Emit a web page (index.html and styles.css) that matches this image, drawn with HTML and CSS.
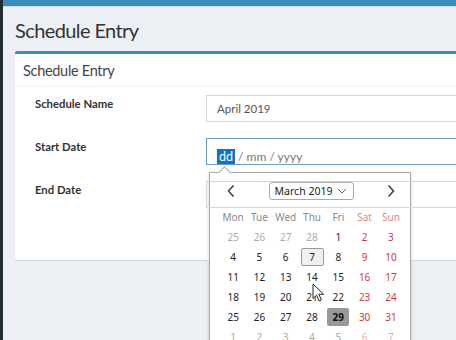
FILE: index.html
```html
<!DOCTYPE html>
<html lang="en">
<head>
    <meta charset="UTF-8">
    <meta name="viewport" content="width=device-width, initial-scale=1.0">
    <title>Schedule Entry</title>
    <link rel="stylesheet" href="styles.css">
</head>
<body>
    <aside class="sidebar"></aside>

    <div class="main">
        <div class="topbar"></div>

        <section class="content-header">
            <h1>Schedule Entry</h1>
        </section>

        <section class="content">
            <div class="box">
                <div class="box-header">
                    <h3 class="box-title">Schedule Entry</h3>
                </div>

                <form class="box-body">
                    <div class="form-row">
                        <label>Schedule Name</label>
                        <div class="field">
                            <div class="input">April 2019</div>
                        </div>
                    </div>

                    <div class="form-row">
                        <label>Start Date</label>
                        <div class="field">
                            <div class="input focused">
                                <span class="seg-active">dd</span><span class="seg">&nbsp;/ mm / yyyy</span>
                            </div>

                            <!-- date picker popup -->
                            <div class="datepicker">
                                <div class="dp-notch"></div>
                                <div class="dp-head">
                                    <svg class="dp-arrow" width="10" height="14" viewBox="0 0 10 14"><path d="M7.5 1.5 L2.5 7 L7.5 12.5" fill="none" stroke="#444" stroke-width="1.6"/></svg>
                                    <div class="dp-month">
                                        March 2019
                                        <svg width="10" height="6" viewBox="0 0 10 6"><path d="M1 1 L5 5 L9 1" fill="none" stroke="#666" stroke-width="1"/></svg>
                                    </div>
                                    <svg class="dp-arrow" width="10" height="14" viewBox="0 0 10 14"><path d="M2.5 1.5 L7.5 7 L2.5 12.5" fill="none" stroke="#444" stroke-width="1.6"/></svg>
                                </div>
                                <div class="dp-grid" id="dpGrid">
                                    <span class="dow">Mon</span><span class="dow">Tue</span><span class="dow">Wed</span><span class="dow">Thu</span><span class="dow">Fri</span><span class="dow wkend">Sat</span><span class="dow wkend">Sun</span>
                                </div>
                            </div>
                        </div>
                    </div>

                    <div class="form-row">
                        <label>End Date</label>
                        <div class="field">
                            <div class="input"></div>
                        </div>
                    </div>
                </form>
            </div>
        </section>
    </div>

    <svg class="cursor" width="13" height="20" viewBox="0 0 13 20"><path d="M1 1 L1 15.5 L4.6 12.2 L7.2 18 L9.4 17 L6.9 11.3 L11.6 11.3 Z" fill="#fff" stroke="#222" stroke-width="1"/></svg>

    <script>
        // Build the March 2019 calendar (weeks start on Monday)
        let grid = document.getElementById('dpGrid');
        let days = [
            [25, 26, 27, 28, 1, 2, 3],
            [4, 5, 6, 7, 8, 9, 10],
            [11, 12, 13, 14, 15, 16, 17],
            [18, 19, 20, 21, 22, 23, 24],
            [25, 26, 27, 28, 29, 30, 31],
            [1, 2, 3, 4, 5, 6, 7]
        ];

        days.forEach(function(week, w) {
            week.forEach(function(day, i) {
                let cell = document.createElement('span');
                cell.classList.add('day');
                let other = (w === 0 && day > 20) || (w === 5);
                if (other) cell.classList.add('other');
                if (i >= 5) cell.classList.add('wkend');
                if (w === 1 && day === 7) cell.classList.add('today');
                if (w === 4 && day === 29) cell.classList.add('picked');
                cell.innerHTML = '<b>' + day + '</b>';
                grid.appendChild(cell);
            });
        });
    </script>
</body>
</html>
```

FILE: styles.css
```css
/* General styles */
body {
    font-family: Lato, "Open Sans", sans-serif;
    background-color: #ecf0f5;
    color: #333;
    margin: 0;
    display: flex;
    height: 340px;
    overflow: hidden;
}

.sidebar {
    width: 3px;
    flex-shrink: 0;
    background-color: #222d32;
}

.main {
    flex: 1;
    min-width: 0;
}

.topbar {
    height: 6px;
    background-color: #3c8dbc;
    border-bottom: 1px solid #c9dcea;
}

/* Page title */
.content-header {
    padding: 9px 12px 0;
    height: 35px;
}

.content-header h1 {
    margin: 0;
    font-size: 20px;
    letter-spacing: -0.6px;
    font-weight: normal;
    line-height: 28px;
    color: #333;
}

.content {
    padding-left: 12px;
}

/* Box */
.box {
    width: 600px;
    background-color: #fff;
    border-top: 3px solid #3c8dbc;
    border-radius: 2px 0 0 2px;
    box-shadow: 0 1px 1px rgba(0, 0, 0, 0.1);
}

.box-header {
    border-bottom: 1px solid #f0f0f0;
    padding: 0 8px;
    height: 32px;
    display: flex;
    align-items: center;
}

.box-title {
    margin: 0;
    font-size: 14.5px;
    letter-spacing: -0.3px;
    font-weight: normal;
    color: #444;
}

.box-body {
    padding: 8px 0 52px 20px;
    display: flex;
    flex-direction: column;
    gap: 16px;
}

.form-row {
    display: grid;
    grid-template-columns: 171px 1fr;
}

.form-row label {
    font-size: 11.3px;
    font-weight: bold;
    color: #333;
    padding-top: 2px;
}

.field {
    position: relative;
}

.input {
    height: 27px;
    box-sizing: border-box;
    border: 1px solid #d2d6de;
    padding: 0 10px;
    font-size: 11.5px;
    color: #555;
    display: flex;
    align-items: center;
}

.input.focused {
    border-color: #6f9bbd;
    align-items: flex-end;
    padding-bottom: 0;
}

.seg-active {
    background-color: #0a74d4;
    color: #fff;
    padding: 0 2px;
    line-height: 15px;
    font-size: 12.5px;
}

.seg {
    color: #777;
    line-height: 15px;
    font-size: 12px;
}

/* Date picker popup */
.datepicker {
    position: absolute;
    top: 34px;
    left: 3px;
    width: 200px;
    height: 190px;
    background-color: #fff;
    border: 1px solid #a8a8a8;
    box-shadow: 0 2px 4px rgba(0, 0, 0, 0.15);
    font-family: "Noto Sans", "Open Sans", sans-serif;
    font-size: 10px;
    color: #222;
}

.dp-notch {
    position: absolute;
    top: -5px;
    left: 10px;
    width: 8px;
    height: 8px;
    background-color: #fff;
    border-top: 1px solid #a8a8a8;
    border-left: 1px solid #a8a8a8;
    transform: rotate(45deg);
}

.dp-head {
    display: flex;
    justify-content: space-between;
    align-items: center;
    padding: 9px 14px 0 16px;
    height: 18px;
}

.dp-month {
    height: 18px;
    width: 85px;
    box-sizing: border-box;
    border: 1px solid #aaa;
    border-radius: 3px;
    display: flex;
    align-items: center;
    justify-content: center;
    gap: 5px;
    font-size: 10.5px;
    color: #222;
}

.dp-grid {
    display: grid;
    grid-template-columns: repeat(7, 26.3px);
    grid-auto-rows: 20px;
    padding: 7px 0 0 10px;
}

.dp-grid span {
    display: flex;
    align-items: center;
    justify-content: center;
}

.dp-grid b {
    font-weight: normal;
    display: flex;
    align-items: center;
    justify-content: center;
    width: 22px;
    height: 18px;
    box-sizing: border-box;
    border-radius: 2px;
}

.dow {
    color: #888;
}

.dow.wkend {
    color: #e08686;
}

.day.wkend {
    color: #d43a3a;
}

.day.other {
    color: #aaa;
}

.day.other.wkend {
    color: #efaaaa;
}

.day.today b {
    width: 23px;
    border: 1px solid #999;
    background-color: #f0f0f0;
}

.day.picked b {
    background-color: #999;
    font-weight: bold;
    color: #111;
}

.cursor {
    position: absolute;
    left: 312px;
    top: 283px;
}
```
